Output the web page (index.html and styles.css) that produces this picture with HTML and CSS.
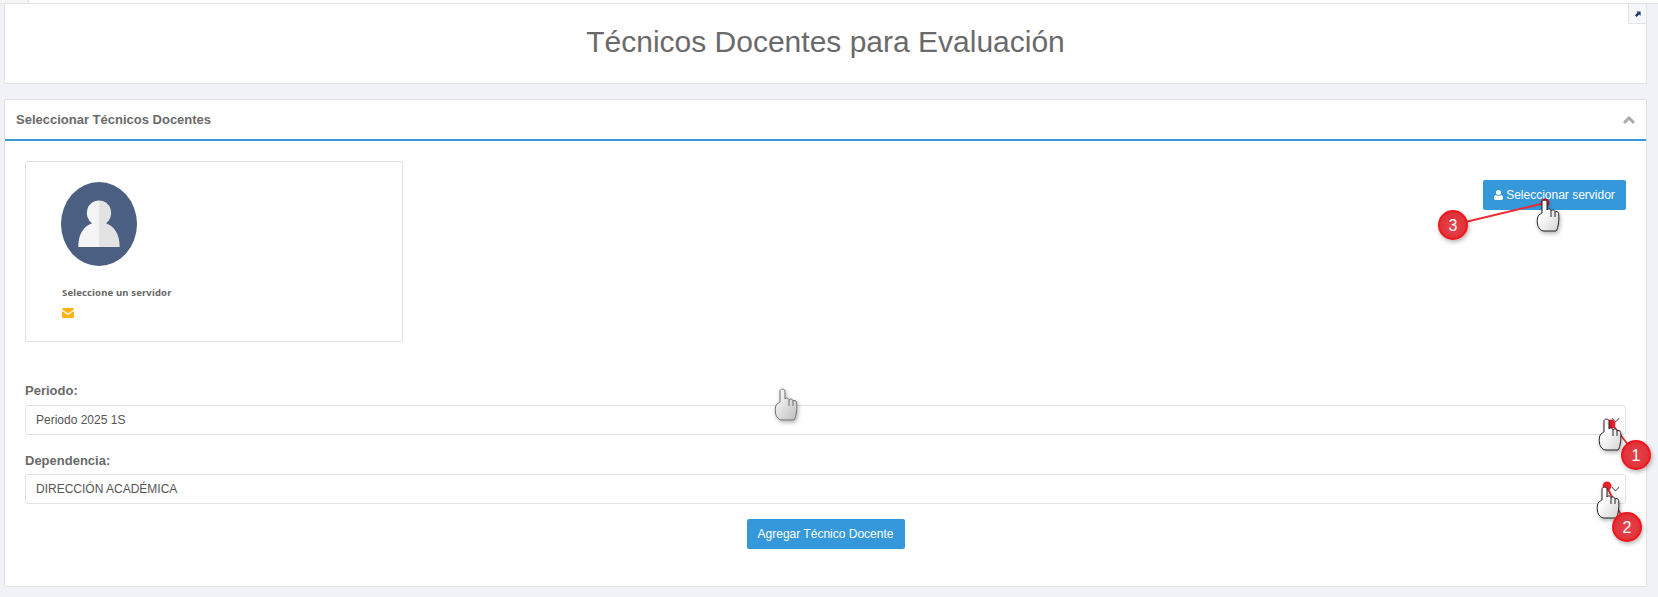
FILE: index.html
```html
<!DOCTYPE html>
<html lang="es">
<head>
<meta charset="utf-8">
<title>Técnicos Docentes para Evaluación</title>
<link rel="stylesheet" href="styles.css">
</head>
<body>
<div class="topstrip"><span class="toptab"></span></div>
<main class="page">
  <section class="card title-card">
    <h1 class="title">Técnicos Docentes para Evaluación</h1>
    <a class="expand" href="#" aria-label="Expandir">
      <svg viewBox="0 0 8 8" width="6" height="6"><path d="M1.500 0.500H7.500V6.500L5.600 4.600L2.200 8L0 5.800L3.400 2.400Z" fill="#1f3563"/></svg>
    </a>
  </section>
  <section class="card panel">
    <header class="panel-head">
      <h2 class="panel-title">Seleccionar Técnicos Docentes</h2>
      <svg class="chevron" viewBox="0 0 12 8" width="12" height="8"><path d="M1 6.800L6 2L11 6.800" fill="none" stroke="#aaaaaa" stroke-width="3"/></svg>
    </header>
    <div class="panel-body">
      <div class="top-row">
        <div class="profile">
          <svg class="avatar" viewBox="0 0 76 84" width="76" height="84">
            <ellipse cx="38" cy="42" rx="38" ry="42" fill="#4a5f82"/>
            <path d="M38 18.500a12 12.500 0 0 0-7 22.800C24 44 17.300 50.500 17.300 65H38Z" fill="#f5f5f5"/>
            <path d="M38 18.500a12 12.500 0 0 1 7 22.800C52 44 58.700 50.500 58.700 65H38Z" fill="#e3e3e3"/>
          </svg>
          <p class="profile-name">Seleccione un servidor</p>
          <svg class="mail" viewBox="0 0 12 10" width="12" height="10"><path d="M1.500 0H10.500A1.500 1.500 0 0 1 12 1.500L6 5.500L0 1.500A1.500 1.500 0 0 1 1.500 0Z" fill="#ffb310"/><path d="M0 3L6 7L12 3V8.500A1.500 1.500 0 0 1 10.500 10H1.500A1.500 1.500 0 0 1 0 8.500Z" fill="#ffb310"/></svg>
        </div>
        <button class="btn btn-select" type="button">
          <svg viewBox="0 0 10 11" width="9" height="10"><path d="M5 0a2.800 2.800 0 1 1 0 5.600a2.800 2.800 0 1 1 0-5.600ZM1.800 5.600C3 6.700 7 6.700 8.200 5.600C9.500 6 10 7.500 10 9.400C10 10.400 9.300 11 8.400 11H1.600C.7 11 0 10.400 0 9.400C0 7.500 .5 6 1.800 5.600Z" fill="#fff"/></svg>
          Seleccionar servidor
        </button>
      </div>
      <div class="field field-first">
        <label class="field-label">Periodo:</label>
        <div class="select"><span>Periodo 2025 1S</span><svg class="caret" viewBox="0 0 10 6" width="9" height="6"><path d="M1 1L5 5L9 1" fill="none" stroke="#666" stroke-width="1.200"/></svg></div>
      </div>
      <div class="field">
        <label class="field-label">Dependencia:</label>
        <div class="select"><span>DIRECCIÓN ACADÉMICA</span><svg class="caret" viewBox="0 0 10 6" width="9" height="6"><path d="M1 1L5 5L9 1" fill="none" stroke="#666" stroke-width="1.200"/></svg></div>
      </div>
      <div class="actions"><button class="btn btn-add" type="button">Agregar Técnico Docente</button></div>
    </div>
  </section>
</main>

<svg class="notes" viewBox="0 0 1658 597" width="1658" height="597" aria-hidden="true">
  <defs>
    <radialGradient id="g" cx="50%" cy="55%" r="55%"><stop offset="0" stop-color="#e8434b"/><stop offset="1" stop-color="#dd3038"/></radialGradient>
    <linearGradient id="h" x1="0" y1="0" x2="1" y2="1"><stop offset=".35" stop-color="#ffffff"/><stop offset="1" stop-color="#d2d2d2"/></linearGradient>
    <linearGradient id="hg" x1="0" y1="0" x2="1" y2="1"><stop offset=".2" stop-color="#f4f4f4"/><stop offset="1" stop-color="#bdbdbd"/></linearGradient>
    <filter id="s" x="-40%" y="-40%" width="180%" height="180%"><feDropShadow dx="1" dy="2" stdDeviation="2" flood-color="#000" flood-opacity=".3"/></filter>
    <path id="handshape" d="M5 2C5 -.5 10 -.5 10 2V10C11 8.500 13.500 8.500 14 11C15 9.500 17.500 9.500 18 12C19 11 21.500 11.500 21.700 13.500C22 17 22 22 21 26C20.500 28 20 30 19 31H7C4 31 1 28 .5 24C0 21 0 17 2 15C3 14 4.500 13.500 5 13Z"/>
    <g id="hand">
      <use href="#handshape" fill="url(#h)" stroke="#222" stroke-width="1" filter="url(#s)"/>
      <path d="M14 11V17M18 12V17" stroke="#222" stroke-width="1" fill="none"/>
    </g>
    <g id="handmuted">
      <use href="#handshape" fill="url(#hg)" stroke="#6f6f6f" stroke-width="1" filter="url(#s)"/>
      <path d="M14 11V17M18 12V17" stroke="#6f6f6f" stroke-width="1" fill="none"/>
    </g>
  </defs>

  <g fill="none" stroke="#ed2a32" stroke-width="1.800">
    <path d="M1612 424L1636 455"/>
    <path d="M1607 487L1627 527"/>
    <path d="M1453 225L1545 203"/>
  </g>
  <circle cx="1545" cy="203" r="4.500" fill="#d01820"/>
  <circle cx="1611" cy="424" r="4.500" fill="#ef2029"/>
  <circle cx="1607" cy="486" r="4.500" fill="#ef2029"/>

  <use href="#hand" x="1537" y="200"/>
  <use href="#hand" x="1599" y="419"/>
  <use href="#hand" x="1597" y="487"/>
  <use href="#handmuted" x="775" y="389"/>

  <g filter="url(#s)" stroke="#f1151e" stroke-width="2" fill="url(#g)">
    <circle cx="1453" cy="225" r="14"/>
    <circle cx="1636" cy="455" r="14"/>
    <circle cx="1627" cy="527" r="14"/>
  </g>
  <g class="note-num" text-anchor="middle">
    <text x="1453" y="231">3</text>
    <text x="1636" y="461">1</text>
    <text x="1627" y="533">2</text>
  </g>
</svg>
</body>
</html>
```

FILE: styles.css
```css
* { box-sizing: border-box; }
html, body { margin: 0; padding: 0; }
body {
  width: 1658px;
  height: 597px;
  overflow: hidden;
  background: #f0f2f7;
  color: #666;
  font-family: "Liberation Sans", Arial, sans-serif;
  position: relative;
}
.topstrip {
  height: 4px;
  background: #fff;
  border-bottom: 1px solid #e2e2e2;
}
.toptab {
  display: block;
  width: 29px;
  height: 3px;
  background: #f5f5f5;
  border-right: 1px solid #e2e2e2;
}
.page {
  padding: 0 11px 0 4px;
  display: flex;
  flex-direction: column;
  gap: 15px;
}
.card {
  background: #fff;
  border: 1px solid #e2e2e2;
  border-radius: 2px;
}
.title-card {
  height: 80px;
  position: relative;
  border-top: 0;
}
.title {
  margin: 0;
  padding-top: 21px;
  text-align: center;
  font-weight: 400;
  font-size: 30px;
  line-height: 34px;
  color: #6a6a6a;
}
.expand {
  position: absolute;
  top: 0;
  right: 0;
  width: 18px;
  height: 20px;
  background: #f6f7fb;
  border-left: 1px solid #e2e2e2;
  border-bottom: 1px solid #e2e2e2;
  display: flex;
  align-items: center;
  justify-content: center;
}
.panel { height: 488px; display: flex; flex-direction: column; }
.panel-head {
  height: 41px;
  flex: none;
  border-bottom: 2px solid #3498db;
  padding: 0 11px;
  display: flex;
  align-items: center;
  justify-content: space-between;
}
.panel-title { margin: 0; font-size: 13px; font-weight: 700; color: #6a6a6a; }
.panel-body { padding: 20px 20px 0; flex: 1; }
.top-row { display: flex; justify-content: space-between; align-items: flex-start; }
.profile {
  width: 378px;
  height: 181px;
  border: 1px solid #e2e2e2;
  border-radius: 2px;
  padding: 20px 35px;
}
.avatar { display: block; }
.profile-name {
  margin: 20px 0 0 1px;
  font-family: "Noto Sans", "Liberation Sans", sans-serif;
  font-size: 9.500px;
  line-height: 13px;
  font-weight: 700;
  color: #666;
  letter-spacing: .15px;
}
.mail { display: block; margin: 9px 0 0 1px; }
.btn {
  border: 0;
  border-radius: 2px;
  background: #3498db;
  color: #fff;
  height: 30px;
  font-family: "Liberation Sans", Arial, sans-serif;
  font-size: 12px;
  padding: 0;
  display: inline-flex;
  align-items: center;
  justify-content: center;
}
.btn-select { width: 143px; margin-top: 19px; gap: 3px; }
.btn-add { width: 158px; }
.field { margin-bottom: 15px; }
.field.field-first { margin-top: 41px; margin-bottom: 18px; }
.field-label {
  display: block;
  font-size: 13px;
  line-height: 16px;
  font-weight: 700;
  color: #6a6a6a;
  margin-bottom: 6px;
}
.field + .field .field-label { margin-bottom: 5px; }
.select {
  height: 30px;
  border: 1px solid #e2e2e2;
  border-radius: 3px;
  padding: 0 10px;
  font-size: 12px;
  color: #555;
  display: flex;
  align-items: center;
  justify-content: space-between;
}
.caret { margin-right: -5px; }
.actions { display: flex; justify-content: center; }
.notes { position: absolute; left: 0; top: 0; pointer-events: none; }
.note-num {
  fill: #fff;
  font-family: "Liberation Sans", Arial, sans-serif;
  font-size: 16px;
}
```
